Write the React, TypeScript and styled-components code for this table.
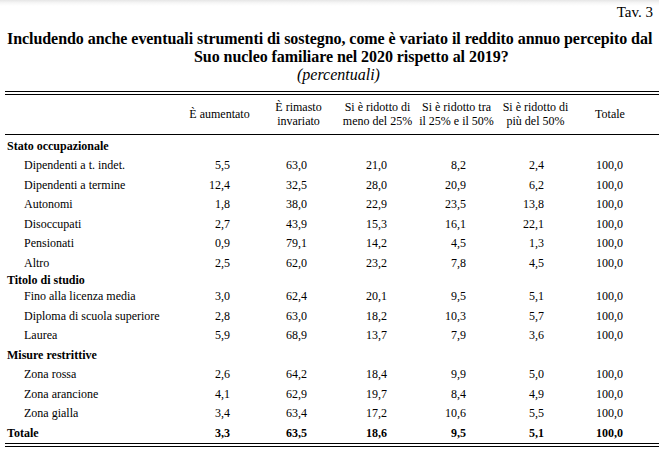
import React from "react";
import styled, { createGlobalStyle } from "styled-components";

const GlobalStyle = createGlobalStyle`
  html, body { margin: 0; padding: 0; }
  body {
    background: linear-gradient(#e6e6e6 0px, #f7f7f7 3px, #ffffff 6px) no-repeat, #ffffff;
    font-family: "Liberation Serif", "Times New Roman", serif;
    color: #000;
    width: 659px;
    overflow: hidden;
  }
`;

const Page = styled.div`
  padding-left: 5px;
  width: 654px;
`;

const TavLabel = styled.div`
  font-size: 15px;
  line-height: 18px;
  margin-top: 3px;
  text-align: right;
  padding-right: 6px;
`;

const TitleBlock = styled.div`
  margin-top: 9px;
`;

const TitleLine = styled.div<{ $indent: number }>`
  font-size: 16px;
  font-weight: bold;
  line-height: 18px;
  letter-spacing: -0.06px;
  white-space: nowrap;
  padding-left: ${(p) => p.$indent}px;
`;

const Subtitle = styled.div<{ $indent: number }>`
  font-size: 16px;
  font-style: italic;
  line-height: 18px;
  padding-left: ${(p) => p.$indent}px;
`;

const DoubleRule = styled.div<{ $mt?: number }>`
  height: 2px;
  border-top: 1px solid #000;
  border-bottom: 1px solid #000;
  margin-top: ${(p) => p.$mt ?? 0}px;
`;

const Row = styled.div<{ $h: number }>`
  display: grid;
  grid-template-columns: 175px repeat(5, 79px) 70px;
  height: ${(p) => p.$h}px;
  align-items: center;
  font-size: 12px;
`;

const HeaderRow = styled(Row)`
  border-bottom: 1px solid #000;
`;

const HeadCell = styled.div`
  text-align: center;
  line-height: 13.5px;
`;

const Body = styled.div`
  padding-top: 1.5px;
`;

const LabelCell = styled.div<{ $bold?: boolean; $indent: number }>`
  padding-left: ${(p) => p.$indent}px;
  font-weight: ${(p) => (p.$bold ? "bold" : "normal")};
  white-space: nowrap;
`;

const NumCell = styled.div<{ $bold?: boolean; $pr: number }>`
  text-align: right;
  padding-right: ${(p) => p.$pr}px;
  font-weight: ${(p) => (p.$bold ? "bold" : "normal")};
`;

const headers: React.ReactNode[] = [
  "È aumentato",
  <>È rimasto<br />invariato</>,
  <>Si è ridotto di<br />meno del 25%</>,
  <>Si è ridotto tra<br />il 25% e il 50%</>,
  <>Si è ridotto di<br />più del 50%</>,
  "Totale",
];

type Item = [string, string[]];
const sections: { title: string; h: number; items: Item[] }[] = [
  {
    title: "Stato occupazionale",
    h: 19.5,
    items: [
      ["Dipendenti a t. indet.", ["5,5", "63,0", "21,0", "8,2", "2,4", "100,0"]],
      ["Dipendenti a termine", ["12,4", "32,5", "28,0", "20,9", "6,2", "100,0"]],
      ["Autonomi", ["1,8", "38,0", "22,9", "23,5", "13,8", "100,0"]],
      ["Disoccupati", ["2,7", "43,9", "15,3", "16,1", "22,1", "100,0"]],
      ["Pensionati", ["0,9", "79,1", "14,2", "4,5", "1,3", "100,0"]],
      ["Altro", ["2,5", "62,0", "23,2", "7,8", "4,5", "100,0"]],
    ],
  },
  {
    title: "Titolo di studio",
    h: 14,
    items: [
      ["Fino alla licenza media", ["3,0", "62,4", "20,1", "9,5", "5,1", "100,0"]],
      ["Diploma di scuola superiore", ["2,8", "63,0", "18,2", "10,3", "5,7", "100,0"]],
      ["Laurea", ["5,9", "68,9", "13,7", "7,9", "3,6", "100,0"]],
    ],
  },
  {
    title: "Misure restrittive",
    h: 19.5,
    items: [
      ["Zona rossa", ["2,6", "64,2", "18,4", "9,9", "5,0", "100,0"]],
      ["Zona arancione", ["4,1", "62,9", "19,7", "8,4", "4,9", "100,0"]],
      ["Zona gialla", ["3,4", "63,4", "17,2", "10,6", "5,5", "100,0"]],
    ],
  },
];

const total = ["3,3", "63,5", "18,6", "9,5", "5,1", "100,0"];
const padRight = [29, 31, 30, 30, 31, 22];

const Nums = ({ values, bold }: { values: string[]; bold?: boolean }) => (
  <>
    {values.map((v, i) => (
      <NumCell key={i} $pr={padRight[i]} $bold={bold}>
        {v}
      </NumCell>
    ))}
  </>
);

export default function App() {
  return (
    <>
      <GlobalStyle />
      <Page>
        <TavLabel>Tav. 3</TavLabel>
        <TitleBlock>
          <TitleLine $indent={2}>
            Includendo anche eventuali strumenti di sostegno, come è variato il reddito annuo percepito dal
          </TitleLine>
          <TitleLine $indent={189}>Suo nucleo familiare nel 2020 rispetto al 2019?</TitleLine>
          <Subtitle $indent={292}>(percentuali)</Subtitle>
        </TitleBlock>
        <DoubleRule $mt={7} />
        <HeaderRow $h={39}>
          <div />
          {headers.map((h, i) => (
            <HeadCell key={i}>{h}</HeadCell>
          ))}
        </HeaderRow>
        <Body>
          {sections.map((s) => (
            <React.Fragment key={s.title}>
              <Row $h={s.h}>
                <LabelCell $bold $indent={2}>
                  {s.title}
                </LabelCell>
              </Row>
              {s.items.map(([label, vals]) => (
                <Row $h={19.5} key={label}>
                  <LabelCell $indent={19}>{label}</LabelCell>
                  <Nums values={vals} />
                </Row>
              ))}
            </React.Fragment>
          ))}
          <Row $h={19.5}>
            <LabelCell $bold $indent={2}>
              Totale
            </LabelCell>
            <Nums values={total} bold />
          </Row>
        </Body>
        <DoubleRule />
      </Page>
    </>
  );
}
